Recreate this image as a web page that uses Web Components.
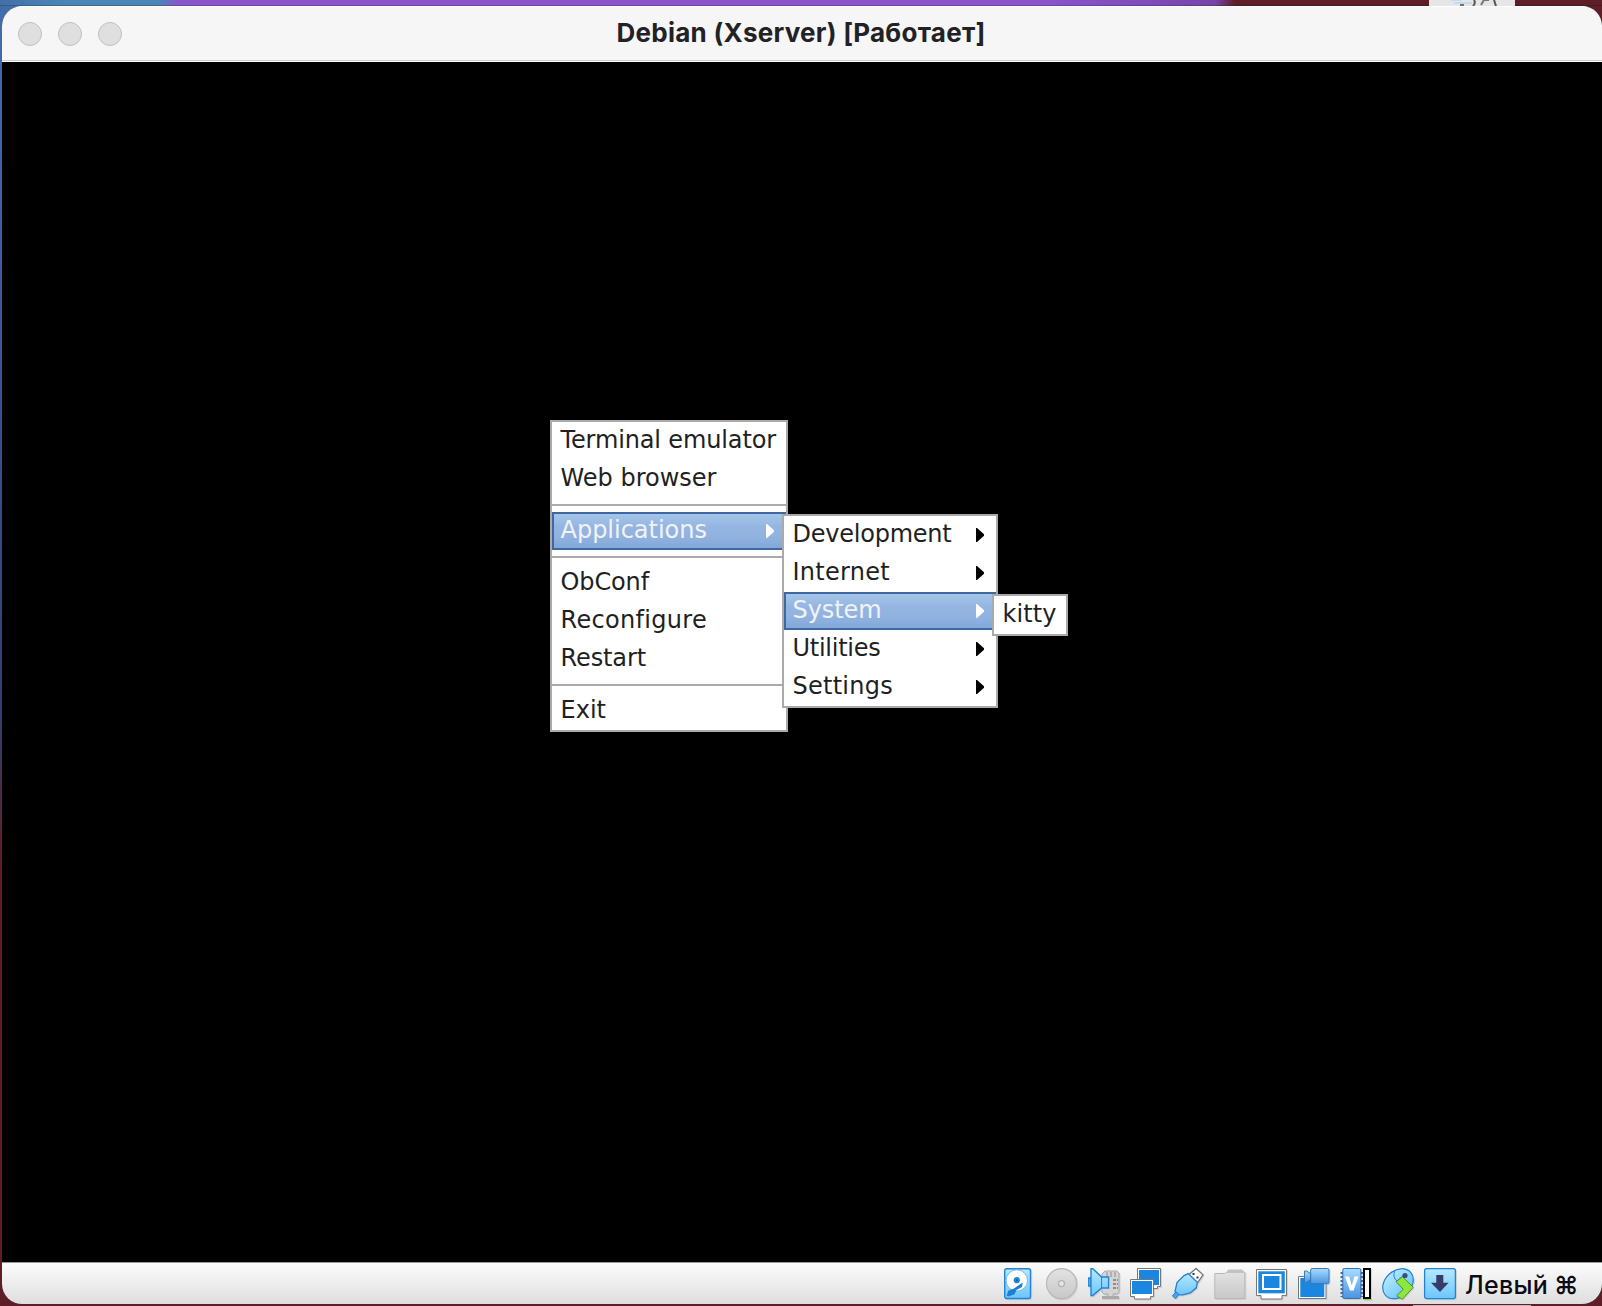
<!DOCTYPE html>
<html lang="ru"><head><meta charset="utf-8"><title>Debian (Xserver)</title>
<style>html,body{margin:0;height:100%;overflow:hidden;background:#5e1e28}</style></head>
<body><vm-desktop></vm-desktop>
<script>
const define=(name,html,ready)=>customElements.define(name,class extends HTMLElement{
  connectedCallback(){
    if(this.shadowRoot)return;
    const root=this.attachShadow({mode:'open'});
    root.innerHTML=typeof html==='function'?html(this):html;
    if(ready)ready.call(this,root);
  }
});

// A single line of text whose tracking is adjusted to a given advance width.
define('fit-text',`<style>:host{display:block;white-space:pre;flex:none}span{display:inline-block}</style><span></span>`,function(root){
  const s=root.querySelector('span'),t=this.getAttribute('label');
  s.textContent=t;
  const w=s.getBoundingClientRect().width;
  s.style.letterSpacing=((+this.getAttribute('w')-w)/t.length)+'px';
});

define('window-button',`<style>:host{display:block;box-sizing:border-box;width:24px;height:24px;border-radius:50%;background:#dfdfdf;border:1px solid #c0c0c0}</style>`);

define('title-bar',`<style>
:host{display:grid;grid-template-columns:1fr auto 1fr;align-items:center;height:56px;box-sizing:border-box;background:#f6f6f6;border-top:1px solid #fff;border-bottom:1px solid #fff;box-shadow:inset 0 -1px #cdcdcd;font:700 26px/32px Inter,sans-serif;color:#222226}
.buttons{display:flex;gap:16px;padding-left:16px}
fit-text{padding:0 2px 2px 0}
</style><div class="buttons"><window-button></window-button><window-button></window-button><window-button></window-button></div><fit-text w="369" label="Debian (Xserver) [Работает]"></fit-text><i></i>`);

define('menu-panel',`<style>:host{display:flex;flex-direction:column;box-sizing:border-box;background:#fff;border:2px solid #aaa;font:24px/38px "DejaVu Sans",sans-serif;color:#221f22}</style><slot></slot>`);
define('menu-separator',`<style>:host{display:block;height:14px;padding:6px 0;box-sizing:border-box}div{height:2px;background:#aaa}</style><div></div>`);
define('menu-item',el=>`<style>
:host{display:flex;align-items:center;justify-content:space-between;height:38px;box-sizing:border-box;padding:0 12px 0 8.5px}
:host([active]){background:linear-gradient(#a5c8eb,#94b5e2 40%,#92b3e0 62%,#7fa7d9);box-shadow:inset 0 0 0 2px #4068a0;color:#f2f2f2}
fit-text{height:38px;line-height:37px}
svg{display:block;fill:#000}
:host([active]) svg{fill:#fff}
:host(:not([sub])) svg{display:none}
</style><fit-text label="${el.getAttribute('label')}" w="${el.getAttribute('w')}"></fit-text><svg width="8" height="14"><path d="M0 0h1l7 6.3v1.4L1 14H0z"/></svg>`);

define('guest-screen',`<style>
:host{display:block;position:relative;flex:1;background:#000;min-height:0}
menu-panel{position:absolute}
.root{left:548px;top:358px;width:238px}
.apps{left:780px;top:452px;width:216px}
.system{left:990px;top:532px;width:76px}
</style>
<menu-panel class="root">
<menu-item label="Terminal emulator" w="215.5"></menu-item>
<menu-item label="Web browser" w="156"></menu-item>
<menu-separator></menu-separator>
<menu-item label="Applications" w="146.5" sub active></menu-item>
<menu-separator></menu-separator>
<menu-item label="ObConf" w="88.5"></menu-item>
<menu-item label="Reconfigure" w="146.5"></menu-item>
<menu-item label="Restart" w="85.5"></menu-item>
<menu-separator></menu-separator>
<menu-item label="Exit" w="45.5"></menu-item>
</menu-panel>
<menu-panel class="apps">
<menu-item label="Development" w="159" sub></menu-item>
<menu-item label="Internet" w="97.5" sub></menu-item>
<menu-item label="System" w="89" sub active></menu-item>
<menu-item label="Utilities" w="88" sub></menu-item>
<menu-item label="Settings" w="100.5" sub></menu-item>
</menu-panel>
<menu-panel class="system"><menu-item label="kitty" w="54"></menu-item></menu-panel>`);

const grad='<defs><linearGradient id="g" x2="0" y2="1"><stop stop-color="#b5e8ff"/><stop offset="1" stop-color="#6cc6fb"/></linearGradient><linearGradient id="h" x2="0" y2="1"><stop stop-color="#a9dcff"/><stop offset="1" stop-color="#4a94e0"/></linearGradient><linearGradient id="m" x2="0" y2="1"><stop stop-color="#e2e2e2"/><stop offset="1" stop-color="#c8c8c8"/></linearGradient></defs>';
const icons={
disk:`<rect x=".7" y="1.7" width="25.8" height="29.8" rx="2" fill="url(#g)" stroke="#2383d4" stroke-width="1.4"/><circle cx="12.8" cy="13.5" r="10.7" fill="#fff" stroke="#5aaeea" stroke-width=".8"/><path d="M2.7 28.8l1.5-5 5.3-2 9.2-6.3-.7 4.5-5.5 3-2 4.2-6 2.3z" fill="#1d7ed2"/><circle cx="12.8" cy="13.2" r="3.1" fill="#2187dd"/><circle cx="12.8" cy="13.2" r="1" fill="#34527a"/>`,
disc:`<circle cx="15.5" cy="16.6" r="15" fill="url(#m)" stroke="#b8b8b8" stroke-width="1.2"/><circle cx="15.5" cy="16.6" r="3" fill="#e6e6e6" stroke="#b5b5b5" stroke-width="1.3"/>`,
audio:`<path d="M20 29.5V27h-4l-2-2V7l3-3h12l2 2v19l-2 2h-4v2.5" fill="#d4d4d4" stroke="#aaa"/><path d="M19 5v5M23 5v5M27 5v5" stroke="#999" stroke-width="1.2"/><path d="M25 13h5M25 17h5M25 21h5" stroke="#777" stroke-width="1.3" stroke-dasharray="3 1"/><path d="M14 29h17v3H14z" fill="#aaa"/><path d="M3 11H.7v8H3z" fill="#6cc6fb" stroke="#2383d4" stroke-width="1.3"/><path d="M3 1.8h1.8l8.8 8.2h7v11h-7l-8.8 7.5H3z" fill="url(#g)" stroke="#2383d4" stroke-width="1.4"/><path d="M13.6 10v11" stroke="#2383d4" stroke-width="1"/>`,
network:`<path d="M7.5 1.5h23v18h-3v2h-20z" fill="#fff" stroke="#777"/><path d="M9 3h20v15H9z" fill="#1a86e0"/><path d="M.5 12.5h23v17h-3v2.5h-16v-2.5h-4z" fill="#fff" stroke="#777"/><path d="M2 14h20v13H2z" fill="#1a86e0"/>`,
usb:`<path d="M16.5 8L24 1.4l7 6.4-5.5 8z" fill="#fff" stroke="#777" stroke-width="1.3"/><path d="M20.5 6h2v2h-2zM24.5 9.5h2v2h-2z" fill="#334"/><path d="M12 8.6l4.3-2 9 8.7-1 5.5-6 5.2-7.7 1.8-5.6-.2-2-3L5 15.5z" fill="url(#g)" stroke="#287fc9" stroke-width="1.3"/><path d="M4 24.8l3 2.6-1.6 2.1-2 2.3-3-3z" fill="#40a8ee" stroke="#287fc9"/>`,
folder:`<path d="M11.7 7l2.5-4.5h14L30 5v2z" fill="#c4c4c4"/><path d="M.8 6.5h10l2-1.3h18v26.3H.8z" fill="url(#m)" stroke="#b8b8b8"/>`,
display:`<path d="M.5 2.5h30v26h-4.5V32H5v-3.5H.5z" fill="#fff" stroke="#777"/><path d="M2.3 4.3h26.5v22H2.3z" fill="#1a86e0"/><path d="M7 8h17.5v14H7z" fill="none" stroke="#fff" stroke-width="2"/>`,
record:`<path d="M.5 9.5H28v22H.5z" fill="#fff" stroke="#777"/><path d="M2.3 11h24v19h-24z" fill="#1a86e0"/><path d="M6.5 4h2l4 2.5v6l-4 3h-2z" fill="url(#h)" stroke="#3b78b8"/><rect x="12.7" y="1.5" width="18.3" height="15.2" rx="1.5" fill="url(#h)" stroke="#3b78b8"/>`,
cpu:`<path d="M1.8 5v25M21.7 5v25" stroke="#426fa0" stroke-width="2.6" stroke-dasharray="2 2"/><rect x="2.8" y="1.5" width="18" height="30" rx="1.5" fill="url(#h)" stroke="#356fae"/><text x="11.7" y="22.8" text-anchor="middle" font-family="Liberation Sans" font-weight="700" font-size="18" fill="#fff" stroke="#fff" stroke-width="1.2">V</text><path d="M23 31h8.5v2H23z" fill="#86e52f"/><path d="M24 2h6v29h-6z" fill="#fff" stroke="#000" stroke-width="2"/>`,
mouse:`<ellipse cx="16" cy="16.7" rx="17" ry="13" transform="rotate(-43 16 16.7)" fill="url(#g)" stroke="#2383d4" stroke-width="1.2"/><path d="M13 3q-3 7 2 11l6-5" fill="none" stroke="#2383d4"/><path d="M14 14.7l6.3-5 11 10.6-11 12-5.6-3.6 6.6-6.4z" fill="#8ee83b" stroke="#4c8424" stroke-width=".9"/><circle cx="23" cy="8.5" r="2.6" fill="#365080"/>`,
keyboard:`<rect x=".6" y="1.6" width="30.8" height="30" rx="2" fill="url(#g)" stroke="#2383d4" stroke-width="1.3"/><path d="M12.3 8h7v7.8h5.3L16 25 7 15.8h5.3z" fill="#363b67"/>`};
define('status-icon',el=>`<style>:host{display:block;width:32px;height:34px}svg{display:block;overflow:visible;filter:drop-shadow(1px 1px 0 #bbb8)}</style><svg width="32" height="34">${grad}${icons[el.getAttribute('kind')]}</svg>`);

define('status-bar',`<style>
:host{display:flex;height:42px;box-sizing:border-box;justify-content:flex-end;align-items:flex-start;gap:10px;padding:4px 24px 0 0;border-top:1px solid #999;background:linear-gradient(#fcfcfc,#ededed 50%,#dedede);font:500 25px/36px Inter,sans-serif;color:#0c0c12}
.host-key{display:flex;gap:6px;width:113px;margin-left:-1px}
.host-key fit-text+fit-text{font-weight:600}
</style>${Object.keys(icons).map(k=>`<status-icon kind="${k}"></status-icon>`).join('')}<div class="host-key"><fit-text w="83" label="Левый"></fit-text><fit-text w="23" label="⌘"></fit-text></div>`);

define('vm-window',`<style>:host{display:flex;flex-direction:column;width:1600px;height:1298px;border-radius:20px;overflow:hidden;background:#000}</style><title-bar></title-bar><guest-screen></guest-screen><status-bar></status-bar>`);

define('vm-desktop',`<style>
:host{display:flex;flex-direction:column;width:1602px;height:1306px;overflow:hidden;background:linear-gradient(90deg,#0000 800px,#5e1e28 801px),linear-gradient(#416eaa,#3d63a0 200px,#343e70 710px,#5e1e28 860px)}
.strip{display:flex;height:6px;flex:none;box-shadow:inset 0 -1px #0003;background:linear-gradient(90deg,#426fa9,#4a84b7 60px 160px,#8855ca 178px 1050px,#7845ac 1215px,#5e1e28 1235px)}
.tile{margin-left:1429px;width:86px;background:#e6e6e6;display:flex}
vm-window{margin-left:2px;flex:none}
</style><div class="strip"><div class="tile"><svg width="86" height="6"><path d="M22 0h11M25 3h18" stroke="#a8cdef"/><path d="M45 0q2 3-1 6M65 0l2 6" fill="none" stroke="#555" stroke-width="2"/><path d="M52 5l3-5h5M31 5h4" fill="none" stroke="#777" stroke-width="2"/></svg></div></div><vm-window></vm-window><div style="margin:1px 0 0 1413px;width:118px;height:1px;background:#c9bfc2"></div>`);
</script></body></html>
